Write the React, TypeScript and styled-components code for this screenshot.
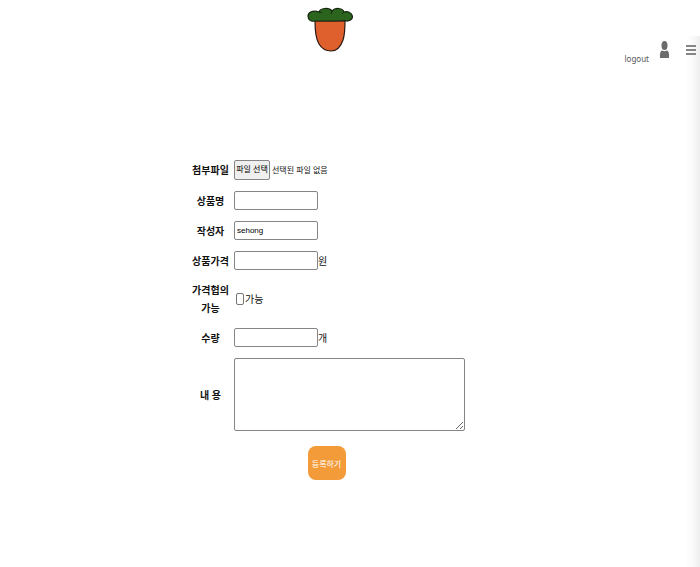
import React from 'react';
import styled, { createGlobalStyle } from 'styled-components';

const GlobalStyle = createGlobalStyle`
  * { box-sizing: border-box; }
  body {
    margin: 0;
    background: #fff;
    color: #111;
    font-family: "Noto Sans", "Noto Sans CJK KR", sans-serif;
    font-size: 9px;
  }
`;

const Page = styled.div`
  display: flex;
  min-height: 100vh;
`;

const Content = styled.div`
  flex: 1;
  min-width: 0;
`;

const Header = styled.header`
  display: grid;
  grid-template-columns: 12fr 46px 13fr;
  padding-top: 7px;
`;

const HomeLink = styled.a`
  grid-column: 2;
  display: block;
  height: 46px;

  svg { display: block; width: 100%; height: 100%; }
`;

const UserNav = styled.nav`
  display: flex;
  justify-content: flex-end;
  align-items: flex-start;
  gap: 10px;
  padding: 33px 15px 0 0;
`;

const LogoutLink = styled.a`
  margin-top: 12px;
  color: #555;
  font-size: 8px;
  line-height: 14px;
  text-decoration: none;
`;

const ProfileLink = styled.a`
  display: block;
  width: 11px;
  height: 19px;

  svg { display: block; width: 100%; height: 100%; }
`;

const Drawer = styled.aside`
  flex: 0 0 15px;
  margin-top: 36px;
  padding-top: 8px;
  background: linear-gradient(to right, #fff, #f9f9f9 55%, #eee);
`;

const MenuButton = styled.button`
  display: block;
  width: 12px;
  height: 12px;
  padding: 0;
  border: 0;
  background: none;
  cursor: pointer;

  svg { display: block; width: 100%; height: 100%; }
`;

const Main = styled.main`
  display: flex;
  justify-content: center;
  padding: 94px 28px 40px 0;
`;

const Form = styled.form`
  display: flex;
  flex-direction: column;
  width: 273px;
`;

const Row = styled.div`
  display: grid;
  grid-template-columns: 37px 1fr;
  column-gap: 5px;
  align-items: center;
  margin-bottom: 11px;
`;

const Label = styled.label`
  font-size: 10px;
  font-weight: 700;
  line-height: 18px;
  text-align: center;
`;

const Field = styled.div`
  display: flex;
  align-items: center;
  font-size: 10px;
  line-height: 18px;
`;

const TextInput = styled.input`
  width: 84px;
  height: 19px;
  padding: 1px 2px;
  border: 1px solid #858585;
  border-radius: 2px;
  background: #fff;
  color: #000;
  font: 8px "Liberation Sans", "Noto Sans CJK KR", sans-serif;
`;

const CheckBox = styled.input`
  appearance: none;
  width: 8px;
  height: 12px;
  margin: 0 1px 0 2px;
  border: 1px solid #767676;
  border-radius: 2px;
  background: #fff;

  &:checked { background: #1a73e8; }
`;

const OptionLabel = styled.label`
  font-size: 10px;
`;

const FilePicker = styled.div`
  position: relative;
  display: flex;
  align-items: center;
  gap: 2px;
  font-size: 8px;
  line-height: 16px;
`;

const FileInput = styled.input`
  position: absolute;
  inset: 0;
  width: 100%;
  opacity: 0;
  cursor: pointer;
`;

const FileButton = styled.span`
  width: 36px;
  height: 20px;
  border: 1px solid #858585;
  border-radius: 2px;
  background: #efefef;
  color: #000;
  text-align: center;
  white-space: nowrap;
`;

const TextArea = styled.textarea`
  display: block;
  width: 100%;
  height: 73px;
  padding: 2px;
  border: 1px solid #858585;
  border-radius: 2px;
  background: #fff;
  font: 8px "Liberation Sans", "Noto Sans CJK KR", sans-serif;
`;

const SubmitRow = styled.div`
  display: flex;
  justify-content: center;
  padding: 4px 4px 0 0;
`;

const SubmitButton = styled.button`
  width: 38px;
  height: 34px;
  padding: 0;
  border: 0;
  border-radius: 8px;
  background: #f29b38;
  color: #fff;
  font-family: inherit;
  font-size: 8px;
  cursor: pointer;
`;

function PotLogo() {
  return (
    <svg viewBox="0 0 46 46" aria-hidden="true">
      <path
        d="M8 14C8 24 9 32 12 37C15 42 19 44 24 44C30 44 34 39 36 33C38 27 38 20 38 14Z"
        fill="#df602d"
        stroke="#2b1a14"
        strokeWidth="1.2"
      />
      <path
        d="M8 14C4 15 1 13 1 9C1 5 6 3 12 5C13 1 22 0 25 4C28 0 36 1 37 5C41 4 45 6 45.400 9C46 13 41 15 38 13.500C32 14 15 14 8 14Z"
        fill="#2b641c"
        stroke="#172611"
        strokeWidth="1.2"
      />
      <path d="M12 5Q14 5 15 6M25 4L24 7M37 5L35 7" fill="none" stroke="#172611" />
    </svg>
  );
}

function PersonIcon() {
  return (
    <svg viewBox="0 0 11 19" aria-hidden="true" fill="#6c6c6c">
      <ellipse cx="5.500" cy="5.500" rx="3" ry="4.500" />
      <path d="M1 18Q0.500 10.500 3.300 10.500Q5.500 12 7.700 10.500Q10.500 10.500 10 18Z" />
    </svg>
  );
}

function MenuIcon() {
  return (
    <svg viewBox="0 0 12 12" aria-hidden="true" fill="#858585">
      <path d="M1 1h10v2H1zM1 5h10v2H1zM1 9h10v2H1z" />
    </svg>
  );
}

export default function App() {
  return (
    <>
      <GlobalStyle />
      <Page>
        <Content>
          <Header>
            <HomeLink href="#" aria-label="홈"><PotLogo /></HomeLink>
            <UserNav>
              <LogoutLink href="#">logout</LogoutLink>
              <ProfileLink href="#" aria-label="프로필"><PersonIcon /></ProfileLink>
            </UserNav>
          </Header>
          <Main>
            <Form onSubmit={(e) => e.preventDefault()}>
              <Row>
                <Label htmlFor="file">첨부파일</Label>
                <Field>
                  <FilePicker>
                    <FileButton>파일 선택</FileButton>
                    <span>선택된 파일 없음</span>
                    <FileInput id="file" type="file" />
                  </FilePicker>
                </Field>
              </Row>
              <Row>
                <Label htmlFor="title">상품명</Label>
                <Field><TextInput id="title" type="text" /></Field>
              </Row>
              <Row>
                <Label htmlFor="writer">작성자</Label>
                <Field><TextInput id="writer" type="text" defaultValue="sehong" /></Field>
              </Row>
              <Row>
                <Label htmlFor="price">상품가격</Label>
                <Field><TextInput id="price" type="text" />원</Field>
              </Row>
              <Row>
                <Label htmlFor="nego">가격협의<br />가능</Label>
                <Field>
                  <CheckBox id="nego" type="checkbox" />
                  <OptionLabel htmlFor="nego">가능</OptionLabel>
                </Field>
              </Row>
              <Row>
                <Label htmlFor="count">수량</Label>
                <Field><TextInput id="count" type="text" />개</Field>
              </Row>
              <Row>
                <Label htmlFor="content">내 용</Label>
                <TextArea id="content" />
              </Row>
              <SubmitRow>
                <SubmitButton type="submit">등록하기</SubmitButton>
              </SubmitRow>
            </Form>
          </Main>
        </Content>
        <Drawer>
          <MenuButton type="button" aria-label="메뉴"><MenuIcon /></MenuButton>
        </Drawer>
      </Page>
    </>
  );
}
